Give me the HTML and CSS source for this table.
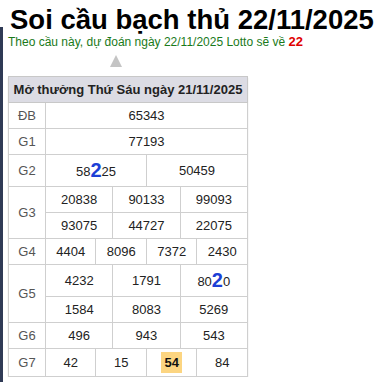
FILE: index.html
```html
<!DOCTYPE html>
<html lang="vi">
<head>
<meta charset="utf-8">
<link rel="stylesheet" href="styles.css">
</head>
<body>
<div class="edge"></div>
<h1 class="title">Soi cầu bạch thủ 22/11/2025</h1>
<p class="sub">Theo cầu này, dự đoán ngày 22/11/2025 Lotto sẽ về <b class="hot">22</b></p>
<div class="arrow"></div>
<table class="kq">
  <colgroup>
    <col class="c-lbl">
    <col><col><col><col><col><col><col><col><col><col><col><col>
  </colgroup>
  <thead>
    <tr><th colspan="13">Mở thưởng Thứ Sáu ngày 21/11/2025</th></tr>
  </thead>
  <tbody>
    <tr><td class="lbl">ĐB</td><td colspan="12">65343</td></tr>
    <tr><td class="lbl">G1</td><td colspan="12">77193</td></tr>
    <tr class="tall"><td class="lbl">G2</td><td colspan="6">58<b class="hl">2</b>25</td><td colspan="6">50459</td></tr>
    <tr><td class="lbl" rowspan="2">G3</td><td colspan="4">20838</td><td colspan="4">90133</td><td colspan="4">99093</td></tr>
    <tr><td colspan="4">93075</td><td colspan="4">44727</td><td colspan="4">22075</td></tr>
    <tr><td class="lbl">G4</td><td colspan="3">4404</td><td colspan="3">8096</td><td colspan="3">7372</td><td colspan="3">2430</td></tr>
    <tr class="tall"><td class="lbl" rowspan="2">G5</td><td colspan="4">4232</td><td colspan="4">1791</td><td colspan="4">80<b class="hl">2</b>0</td></tr>
    <tr><td colspan="4">1584</td><td colspan="4">8083</td><td colspan="4">5269</td></tr>
    <tr><td class="lbl">G6</td><td colspan="4">496</td><td colspan="4">943</td><td colspan="4">543</td></tr>
    <tr class="g7"><td class="lbl">G7</td><td colspan="3">42</td><td colspan="3">15</td><td colspan="3"><b class="lot">54</b></td><td colspan="3">84</td></tr>
  </tbody>
</table>
</body>
</html>
```
FILE: styles.css
```css
html, body {
  margin: 0;
  padding: 0;
  background: #fff;
}
body {
  font-family: "Liberation Sans", Arial, sans-serif;
  color: #222;
}
.edge {
  position: absolute;
  left: 0;
  top: 27px;
  width: 3px;
  height: 355px;
  background: #2f3a55;
}
.title {
  margin: 0 0 0 10px;
  padding-top: 4px;
  font-size: 27.5px;
  line-height: 31px;
  font-weight: bold;
  color: #000;
  white-space: nowrap;
}
.sub {
  margin: 0 0 0 8px;
  font-size: 12px;
  line-height: 14px;
  color: #1a7a1a;
  white-space: nowrap;
}
.hot {
  color: #e00000;
  font-size: 13px;
}
.arrow {
  margin: 6px 0 0 110px;
  width: 0;
  height: 0;
  border-left: 6px solid transparent;
  border-right: 6px solid transparent;
  border-bottom: 12px solid #c4c4c4;
}
.kq {
  margin: 9px 0 0 8px;
  width: 240px;
  table-layout: fixed;
  border-collapse: collapse;
  font-size: 13px;
  border: 1px solid #c8c8c8;
  box-shadow: 0 2px 1px #d6d6d6;
}
.c-lbl { width: 37px; }
.kq th {
  background: #dcdce4;
  color: #222;
  font-size: 13px;
  font-weight: bold;
  height: 25px;
  line-height: 16px;
  padding: 0;
  border: 1px solid #c8c8c8;
  white-space: nowrap;
}
.kq td {
  border: 1px solid #cfcfcf;
  height: 25px;
  line-height: 16px;
  padding: 0;
  text-align: center;
  color: #222;
}
.kq td.lbl {
  color: #555;
}
.kq tr.tall td { height: 31px; }
.kq tr.g7 td { height: 27px; }
.hl {
  color: #1c3fd6;
  font-size: 20px;
  line-height: 16px;
  vertical-align: -1px;
}
.lot {
  display: inline-block;
  background: #fcd581;
  color: #111;
  padding: 3px 3px;
  line-height: 15px;
  vertical-align: middle;
}
```
